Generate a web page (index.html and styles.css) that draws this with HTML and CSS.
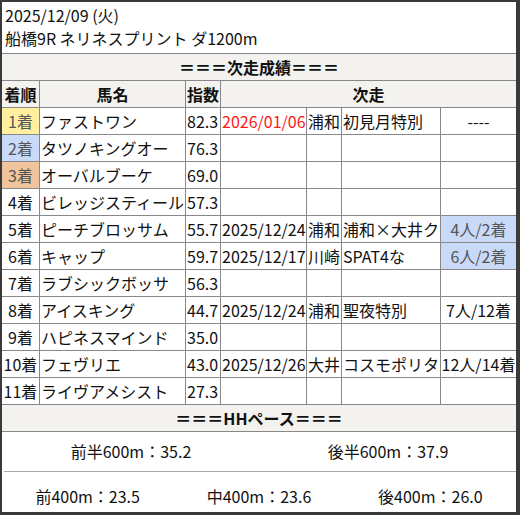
FILE: index.html
```html
<!DOCTYPE html>
<html lang="ja">
<head>
<meta charset="utf-8">
<link rel="stylesheet" href="styles.css">
</head>
<body>
<div class="frame">
  <div class="title">
    <div class="title-line">2025/12/09 (火)</div>
    <div class="title-line">船橋9R ネリネスプリント ダ1200m</div>
  </div>
  <div class="grid">
    <div class="sec span-all">＝＝＝次走成績＝＝＝</div>
    <div class="hd">着順</div>
    <div class="hd">馬名</div>
    <div class="hd">指数</div>
    <div class="hd span-next last">次走</div>

    <div class="c rank gold">1着</div><div class="c name">ファストワン</div><div class="c num">82.3</div><div class="c date red">2026/01/06</div><div class="c venue">浦和</div><div class="c race">初見月特別</div><div class="c res last">----</div>
    <div class="c rank silver">2着</div><div class="c name">タツノキングオー</div><div class="c num">76.3</div><div class="c date"></div><div class="c venue"></div><div class="c race"></div><div class="c res last"></div>
    <div class="c rank bronze">3着</div><div class="c name">オーバルブーケ</div><div class="c num">69.0</div><div class="c date"></div><div class="c venue"></div><div class="c race"></div><div class="c res last"></div>
    <div class="c rank">4着</div><div class="c name">ビレッジスティール</div><div class="c num">57.3</div><div class="c date"></div><div class="c venue"></div><div class="c race"></div><div class="c res last"></div>
    <div class="c rank">5着</div><div class="c name">ピーチブロッサム</div><div class="c num">55.7</div><div class="c date">2025/12/24</div><div class="c venue">浦和</div><div class="c race">浦和×大井ク</div><div class="c res last blue">4人/2着</div>
    <div class="c rank">6着</div><div class="c name">キャップ</div><div class="c num">59.7</div><div class="c date">2025/12/17</div><div class="c venue">川崎</div><div class="c race">SPAT4な</div><div class="c res last blue">6人/2着</div>
    <div class="c rank">7着</div><div class="c name">ラブシックボッサ</div><div class="c num">56.3</div><div class="c date"></div><div class="c venue"></div><div class="c race"></div><div class="c res last"></div>
    <div class="c rank">8着</div><div class="c name">アイスキング</div><div class="c num">44.7</div><div class="c date">2025/12/24</div><div class="c venue">浦和</div><div class="c race">聖夜特別</div><div class="c res last">7人/12着</div>
    <div class="c rank">9着</div><div class="c name">ハピネスマインド</div><div class="c num">35.0</div><div class="c date"></div><div class="c venue"></div><div class="c race"></div><div class="c res last"></div>
    <div class="c rank">10着</div><div class="c name">フェヴリエ</div><div class="c num">43.0</div><div class="c date">2025/12/26</div><div class="c venue">大井</div><div class="c race">コスモポリタ</div><div class="c res last">12人/14着</div>
    <div class="c rank">11着</div><div class="c name">ライヴアメシスト</div><div class="c num">27.3</div><div class="c date"></div><div class="c venue"></div><div class="c race"></div><div class="c res last"></div>

    <div class="sec span-all">＝＝＝HHペース＝＝＝</div>
  </div>
  <div class="pace2">
    <div class="pace-item">前半600m：35.2</div>
    <div class="pace-item">後半600m：37.9</div>
  </div>
  <div class="pace3">
    <div class="pace-item">前400m：23.5</div>
    <div class="pace-item">中400m：23.6</div>
    <div class="pace-item">後400m：26.0</div>
  </div>
</div>
</body>
</html>
```
FILE: styles.css
```css
* { box-sizing: border-box; }
html, body { margin: 0; padding: 0; background: #ffffff; }
body {
  font-family: "Noto Sans CJK JP", "Noto Sans", sans-serif;
  font-size: 16px;
  color: #111;
}
.frame {
  width: 520px;
  height: 515px;
  border-style: solid;
  border-color: #3a3a3a;
  border-width: 2px 4px 3px 2px;
  background: #fff;
  display: flex;
  flex-direction: column;
}
.title {
  height: 52px;
  padding: 2px 0 0 3px;
  border-bottom: 1px solid #888;
}
.title-line { line-height: 23px; height: 23px; white-space: nowrap; }

.grid {
  display: grid;
  grid-template-columns: 38px 146px 35px 86px 35px 99px 75px;
  grid-auto-rows: 27px;
}
.grid > div {
  border-bottom: 1px solid #888;
  border-right: 1px solid #888;
  line-height: 26px;
  white-space: nowrap;
  overflow: hidden;
}
.grid > .last, .grid > .span-all { border-right: none; }
.span-all { grid-column: 1 / -1; }
.span-next { grid-column: 4 / -1; }
.sec {
  background: #f3f2ee;
  font-weight: bold;
  text-align: center;
}
.hd {
  background: #f3f2ee;
  font-weight: bold;
  text-align: center;
}
.c { padding: 0 0 0 1px; }
.rank { text-align: center; padding: 0; }
.res { text-align: center; padding: 0; }
.gold { background: #ffef9e; color: #555; }
.silver { background: #c9daf8; color: #555; }
.bronze { background: #f0c49c; color: #555; }
.blue { background: #c9daf8; color: #555; }
.red { color: #ff1a1a; }

.pace2 {
  display: grid;
  grid-template-columns: 1fr 1fr;
  height: 40px;
  margin: 0 0 0 2px;
  border-bottom: 1px solid #a8a8a8;
}
.pace3 {
  display: grid;
  grid-template-columns: 1fr 1fr 1fr;
  flex: 1;
  padding-top: 8px;
}
.pace2 .pace-item { line-height: 38px; text-align: center; }
.pace3 .pace-item { line-height: 32px; text-align: center; }
.pace2 .pace-item:first-child { margin-left: -2px; }
```
